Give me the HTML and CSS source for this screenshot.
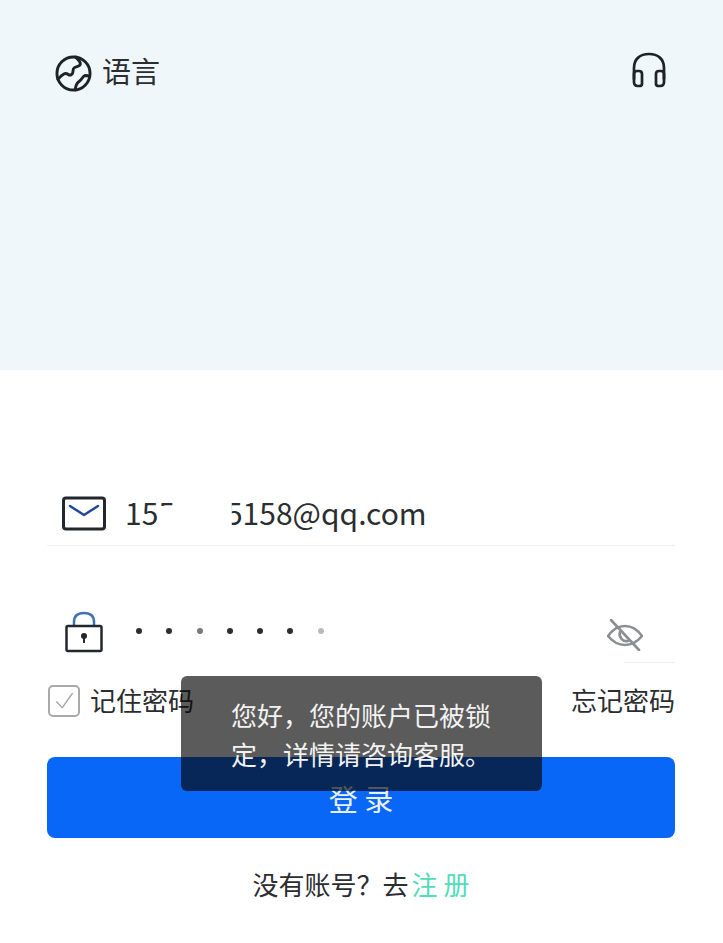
FILE: index.html
```html
<!DOCTYPE html>
<html lang="zh-CN">
<head>
    <meta charset="UTF-8">
    <meta name="viewport" content="width=device-width, initial-scale=1.0">
    <title>登录</title>
    <link rel="stylesheet" href="styles.css">
</head>
<body>
    <header class="top-panel">
        <div class="lang">
            <svg class="globe-icon" viewBox="0 0 38 38" fill="none" stroke="#1f2328" stroke-width="3" stroke-linejoin="round" stroke-linecap="round">
                <circle cx="19" cy="19" r="17"/>
                <path d="M3 25c3-3 5-6 8-6 3 0 3 3 6 1 3-2 0-5 3-7 3-2 6-1 6-4 0-3-3-5-5-7"/>
                <path d="M21 36c0-4 1-7 4-9 3-2 3-5 6-6 1 0 3 0 4 1"/>
            </svg>
            <span>语言</span>
        </div>
        <svg class="phones-icon" viewBox="0 0 34 36" fill="none" stroke="#1f2328" stroke-width="2.7" stroke-linecap="round" stroke-linejoin="round">
            <path d="M2 27V16C2 7 8 2 17 2s15 5 15 14v11"/>
            <path d="M2 22c0-2 1-3 3-3h2c2 0 3 1 3 3v10c0 1-1 2-3 2H6c-2 0-4-1-4-4z"/>
            <path d="M32 22c0-2-1-3-3-3h-2c-2 0-3 1-3 3v10c0 1 1 2 3 2h1c2 0 4-1 4-4z"/>
        </svg>
    </header>

    <main class="form">
        <div class="field field-mail">
            <svg class="mail-icon" viewBox="0 0 44 36" fill="none" stroke-linecap="round" stroke-linejoin="round">
                <rect x="1.5" y="2" width="41" height="31" rx="2.5" stroke="#23272c" stroke-width="3"/>
                <path d="M8 10l14 9 14-9" stroke="#23479b" stroke-width="2.5"/>
            </svg>
            <span class="mail-text"><span class="cut-low">155</span><span class="mail-gap"></span><span class="cut-left">5</span>158@qq.com</span>
        </div>

        <div class="field field-pass">
            <svg class="lock-icon" viewBox="0 0 38 42" fill="none" stroke-linejoin="round">
                <path d="M9 15V11C9 5 13 2 19 2s10 3 10 9v4" stroke="#3f73b5" stroke-width="2.5"/>
                <rect x="1.5" y="15" width="35" height="25" rx="1.5" stroke="#23272c" stroke-width="2.5"/>
                <circle cx="19" cy="25" r="3" fill="#23272c"/>
                <path d="M19 26v6" stroke="#23272c" stroke-width="2"/>
            </svg>
            <div class="dots">
                <i></i><i></i><i class="dim"></i><i></i><i></i><i></i><i class="faint"></i>
            </div>
            <svg class="eye-icon" viewBox="0 0 36 32" fill="none" stroke="#8b8f92" stroke-width="2.6" stroke-linecap="round" stroke-linejoin="round">
                <path d="M1 17C6 10 12 7 18 7s12 3 17 10c-5 6-11 9-17 9S6 23 1 17z"/>
                <path d="M13 13a7 7 0 0 0 8 9"/>
                <path d="M4 1l28 30"/>
            </svg>
        </div>
        <div class="short-line"></div>

        <div class="options">
            <label class="remember">
                <span class="check">
                    <svg viewBox="0 0 24 24" fill="none" stroke="#a6a6a6" stroke-width="1.6" stroke-linecap="round" stroke-linejoin="round"><path d="M3 13l7 7L22 3"/></svg>
                </span>
                记住密码
            </label>
            <a class="forgot">忘记密码</a>
        </div>

        <button class="login-btn">登 录</button>

        <p class="signup">没有账号？去<a>注 册</a></p>

        <div class="toast">您好，您的账户已被锁定，详情请咨询客服。</div>
    </main>
</body>
</html>
```

FILE: styles.css
```css
* {
    box-sizing: border-box;
}
body {
    margin: 0;
    background-color: #fff;
    color: #2b2d30;
    font-family: "Noto Sans CJK SC", "Noto Sans", sans-serif;
}
.top-panel {
    height: 370px;
    padding: 52px 57px 0 55px;
    background-color: #eff7fa;
    display: flex;
    justify-content: space-between;
    align-items: flex-start;
}
.lang {
    display: flex;
    align-items: flex-start;
    gap: 10px;
    font-size: 29px;
    line-height: 36px;
}
.globe-icon {
    width: 37px;
    height: 37px;
    margin-top: 3px;
}
.phones-icon {
    width: 34px;
    height: 36px;
}
.form {
    position: relative;
    padding: 0 48px 0 47px;
}
.field {
    display: flex;
    align-items: center;
}
.field-mail {
    height: 176px;
    padding: 120px 0 0 15px;
    border-bottom: 1px solid #efefef;
}
.mail-icon {
    width: 44px;
    height: 36px;
    margin-bottom: 8px;
}
.mail-text {
    margin: 0 0 12px 19px;
    font-size: 30px;
    line-height: 40px;
    white-space: nowrap;
}
.cut-low,
.cut-left {
    display: inline-block;
}
.cut-low {
    clip-path: polygon(0 0, 100% 0, 100% 36%, 66% 36%, 66% 100%, 0 100%);
}
.cut-left {
    clip-path: inset(0 0 0 35%);
}
.mail-gap {
    display: inline-block;
    width: 51px;
}
.field-pass {
    height: 116px;
    padding: 66px 32px 0 18px;
    justify-content: space-between;
}
.lock-icon {
    width: 38px;
    height: 42px;
    margin-top: -10px;
}
.dots {
    display: flex;
    gap: 24.3px;
    margin: -12px auto 0 33px;
}
.dots i {
    width: 6px;
    height: 6px;
    border-radius: 50%;
    background-color: #2b2d30;
}
.dots .dim {
    background-color: #77797c;
}
.dots .faint {
    background-color: #b9babc;
}
.eye-icon {
    width: 36px;
    height: 32px;
    margin-top: -4px;
}
.short-line {
    width: 51px;
    height: 1px;
    margin-left: auto;
    background-color: #eeeeee;
}
.options {
    display: flex;
    justify-content: space-between;
    align-items: center;
    height: 38px;
    margin-top: 17px;
    font-size: 26px;
}
.remember {
    display: flex;
    align-items: center;
    gap: 10px;
    padding-left: 1px;
}
.check {
    width: 32px;
    height: 32px;
    padding: 4px;
    margin-top: 4px;
    border: 2px solid #a9a9a9;
    border-radius: 5px;
}
.check svg {
    display: block;
}
.login-btn {
    display: block;
    width: 100%;
    height: 81px;
    margin-top: 39px;
    background-color: #0867f7;
    color: #e8f1fb;
    border: none;
    border-radius: 8px;
    font-family: inherit;
    font-size: 29px;
}
.signup {
    margin: 26px 0 0;
    text-align: center;
    font-size: 26px;
    line-height: 40px;
}
.signup a {
    margin-left: 3px;
    color: #52dcb9;
}
.toast {
    position: absolute;
    left: 181px;
    top: 306px;
    width: 361px;
    height: 115px;
    padding: 19px 50px;
    background-color: rgba(6, 6, 6, 0.66);
    border-radius: 6px;
    color: #f2f2f2;
    font-size: 26px;
    line-height: 39px;
}
```
